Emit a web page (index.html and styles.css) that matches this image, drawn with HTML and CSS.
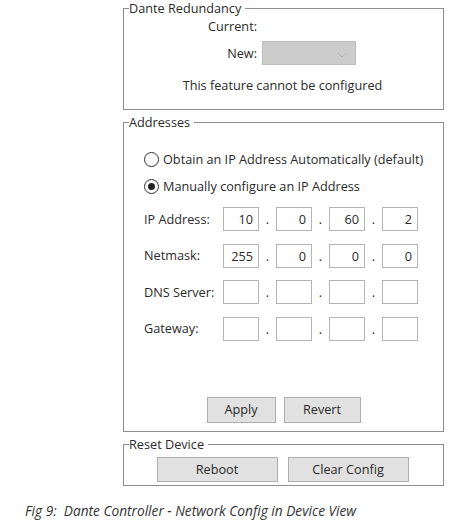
FILE: index.html
```html
<!DOCTYPE html>
<html>
<head>
<meta charset="utf-8">
<link rel="stylesheet" href="styles.css">
</head>
<body>
<div class="panel">
  <fieldset class="group redundancy">
    <legend>Dante Redundancy</legend>
    <div class="red-grid">
      <span class="lbl">Current:</span><span></span>
      <span class="lbl">New:</span>
      <div class="combo"><svg width="10" height="6" viewBox="0 0 10 6"><path d="M1 1 L5 5 L9 1" fill="none" stroke="#b4b4b4" stroke-width="1"/></svg></div>
    </div>
    <div class="note">This feature cannot be configured</div>
  </fieldset>

  <fieldset class="group addresses">
    <legend>Addresses</legend>
    <div class="addr-body">
      <div class="radio-row"><span class="radio"></span>Obtain an IP Address Automatically (default)</div>
      <div class="radio-row second"><span class="radio checked"></span>Manually configure an IP Address</div>
      <div class="ip-rows">
        <div class="ip-row"><span class="ip-lbl">IP Address:</span><span class="oct">10</span><span class="dot">.</span><span class="oct">0</span><span class="dot">.</span><span class="oct">60</span><span class="dot">.</span><span class="oct">2</span></div>
        <div class="ip-row"><span class="ip-lbl">Netmask:</span><span class="oct">255</span><span class="dot">.</span><span class="oct">0</span><span class="dot">.</span><span class="oct">0</span><span class="dot">.</span><span class="oct">0</span></div>
        <div class="ip-row"><span class="ip-lbl">DNS Server:</span><span class="oct"></span><span class="dot">.</span><span class="oct"></span><span class="dot">.</span><span class="oct"></span><span class="dot">.</span><span class="oct"></span></div>
        <div class="ip-row"><span class="ip-lbl">Gateway:</span><span class="oct"></span><span class="dot">.</span><span class="oct"></span><span class="dot">.</span><span class="oct"></span><span class="dot">.</span><span class="oct"></span></div>
      </div>
    </div>
    <div class="btn-row">
      <span class="btn apply">Apply</span>
      <span class="btn revert">Revert</span>
    </div>
  </fieldset>

  <fieldset class="group reset">
    <legend>Reset Device</legend>
    <div class="btn-row reset-row">
      <span class="btn wide">Reboot</span>
      <span class="btn wide">Clear Config</span>
    </div>
  </fieldset>
</div>
<p class="caption">Fig 9:&nbsp; Dante Controller - Network Config in Device View</p>
</body>
</html>
```
FILE: styles.css
```css
html, body {
  margin: 0;
  padding: 0;
  background: #ffffff;
}
body {
  font-family: "Open Sans", "Noto Sans", sans-serif;
  font-size: 12.7px;
  line-height: 17px;
  color: #2a2a2a;
  width: 454px;
  height: 526px;
  overflow: hidden;
}
.panel {
  margin-left: 123px;
  width: 321px;
  display: flex;
  flex-direction: column;
  gap: 4px;
}
.group {
  border: 1px solid #8e8e8e;
  margin: 0;
  padding: 0;
  min-width: 0;
}
.group legend {
  margin-left: 5px;
  padding: 0 4px 0 0;
  line-height: 17px;
}
.redundancy {
  padding: 1px 0 15px 0;
}
.red-grid {
  display: grid;
  grid-template-columns: 133px 94px;
  column-gap: 5px;
  row-gap: 6px;
  align-items: center;
}
.lbl {
  text-align: right;
}
.combo {
  height: 24px;
  box-sizing: border-box;
  background: #cccccc;
  border: 1px solid #bdbdbd;
  display: flex;
  align-items: center;
  justify-content: flex-end;
  padding-right: 8px;
}
.combo svg {
  display: block;
  margin-top: 3px;
}
.note {
  text-align: center;
  margin-top: 12px;
  padding-right: 2px;
}
.addresses {
  padding: 0 0 8px 0;
}
.addr-body {
  padding: 20px 0 0 20px;
}
.radio-row {
  display: flex;
  align-items: center;
  gap: 4px;
  height: 17px;
}
.radio-row.second {
  margin-top: 10px;
}
.radio {
  width: 15px;
  height: 15px;
  box-sizing: border-box;
  border: 1px solid #333333;
  border-radius: 50%;
  display: flex;
  align-items: center;
  justify-content: center;
  background: #fff;
}
.radio.checked::after {
  content: "";
  width: 7px;
  height: 7px;
  border-radius: 50%;
  background: #222222;
}
.ip-rows {
  margin-top: 12px;
  display: flex;
  flex-direction: column;
  gap: 12.5px;
}
.ip-row {
  display: flex;
  align-items: center;
  height: 24px;
}
.ip-lbl {
  width: 79px;
}
.oct {
  width: 36px;
  height: 24px;
  box-sizing: border-box;
  border: 1px solid #b4b4b4;
  text-align: right;
  padding-right: 5px;
  line-height: 22px;
}
.dot {
  width: 17px;
  text-align: center;
  line-height: 24px;
}
.btn-row {
  display: flex;
  justify-content: center;
  gap: 8px;
  margin-top: 56px;
}
.btn {
  height: 26px;
  box-sizing: border-box;
  background: #e1e1e1;
  border: 1px solid #adadad;
  display: flex;
  align-items: center;
  justify-content: center;
}
.apply { width: 69px; }
.revert { width: 77px; }
.reset {
  padding: 4px 0 3px 0;
}
.reset-row {
  margin-top: 0;
  gap: 10px;
  padding-right: 2px;
}
.btn.wide {
  width: 121px;
  height: 25px;
}
.caption {
  margin: 16px 0 0 25px;
  font-family: "Open Sans", "Noto Sans", sans-serif;
  font-style: italic;
  font-size: 13.7px;
  line-height: 17px;
  color: #333333;
}
```
